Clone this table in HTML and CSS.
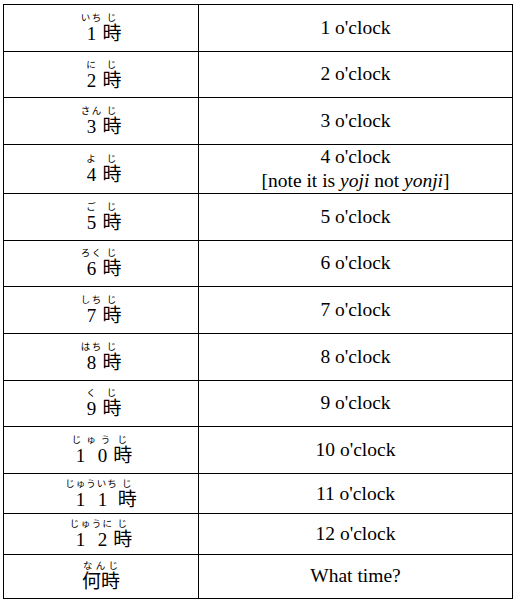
FILE: index.html
```html
<!DOCTYPE html>
<html lang="ja">
<head>
<meta charset="utf-8">
<title>時 — o'clock</title>
<link rel="stylesheet" href="styles.css">
</head>
<body>
<table class="times">
  <tr><td class="jp"><ruby><span class="d">1</span><rt>いち</rt></ruby><ruby>時<rt>じ</rt></ruby></td><td class="en">1 o'clock</td></tr>
  <tr><td class="jp"><ruby><span class="d">2</span><rt>に</rt></ruby><ruby>時<rt>じ</rt></ruby></td><td class="en">2 o'clock</td></tr>
  <tr><td class="jp"><ruby><span class="d">3</span><rt>さん</rt></ruby><ruby>時<rt>じ</rt></ruby></td><td class="en">3 o'clock</td></tr>
  <tr class="tall"><td class="jp"><ruby><span class="d">4</span><rt>よ</rt></ruby><ruby>時<rt>じ</rt></ruby></td><td class="en">4 o'clock<br>[note it is <i>yoji</i> not <i>yonji</i>]</td></tr>
  <tr><td class="jp"><ruby><span class="d">5</span><rt>ご</rt></ruby><ruby>時<rt>じ</rt></ruby></td><td class="en">5 o'clock</td></tr>
  <tr><td class="jp"><ruby><span class="d">6</span><rt>ろく</rt></ruby><ruby>時<rt>じ</rt></ruby></td><td class="en">6 o'clock</td></tr>
  <tr><td class="jp"><ruby><span class="d">7</span><rt>しち</rt></ruby><ruby>時<rt>じ</rt></ruby></td><td class="en">7 o'clock</td></tr>
  <tr><td class="jp"><ruby><span class="d">8</span><rt>はち</rt></ruby><ruby>時<rt>じ</rt></ruby></td><td class="en">8 o'clock</td></tr>
  <tr><td class="jp"><ruby><span class="d">9</span><rt>く</rt></ruby><ruby>時<rt>じ</rt></ruby></td><td class="en">9 o'clock</td></tr>
  <tr><td class="jp"><ruby><span class="d">1</span><span class="d">0</span><rt>じゅう</rt></ruby><ruby>時<rt>じ</rt></ruby></td><td class="en">10 o'clock</td></tr>
  <tr class="short"><td class="jp"><ruby><span class="d">1</span><span class="d">1</span><rt>じゅういち</rt></ruby><ruby>時<rt>じ</rt></ruby></td><td class="en">11 o'clock</td></tr>
  <tr class="short"><td class="jp"><ruby><span class="d">1</span><span class="d">2</span><rt>じゅうに</rt></ruby><ruby>時<rt>じ</rt></ruby></td><td class="en">12 o'clock</td></tr>
  <tr class="last"><td class="jp"><ruby>何時<rt>なんじ</rt></ruby></td><td class="en">What time?</td></tr>
</table>
</body>
</html>
```
FILE: styles.css
```css
html, body {
  margin: 0;
  padding: 0;
  background: #ffffff;
}

.times {
  margin: 4px 0 0 3px;
  width: 510px;
  border-collapse: collapse;
  table-layout: fixed;
  color: #000000;
}

.times tr {
  height: 46.67px;
}

.times tr.tall {
  height: 49px;
}

.times tr.short {
  height: 40.5px;
}

.times tr.last {
  height: 44px;
}

.times td {
  border: 1px solid #000000;
  padding: 0 4px;
  text-align: center;
  vertical-align: middle;
}

.jp {
  width: 186px;
  font-family: "Liberation Serif", "Noto Sans CJK JP", serif;
  font-size: 19px;
  line-height: 1.05;
  padding-top: 6px;
}

.jp ruby {
  ruby-align: space-around;
  ruby-position: over;
}

.jp .d {
  display: inline-block;
  width: 1.15em;
  text-align: center;
}

.jp rt {
  font-family: "Noto Sans CJK JP", sans-serif;
  font-size: 9.5px;
  line-height: 1.2;
  letter-spacing: 1px;
}

.en {
  font-family: "Liberation Serif", serif;
  font-size: 19.5px;
  line-height: 24px;
}

.en i {
  font-style: italic;
}
```
